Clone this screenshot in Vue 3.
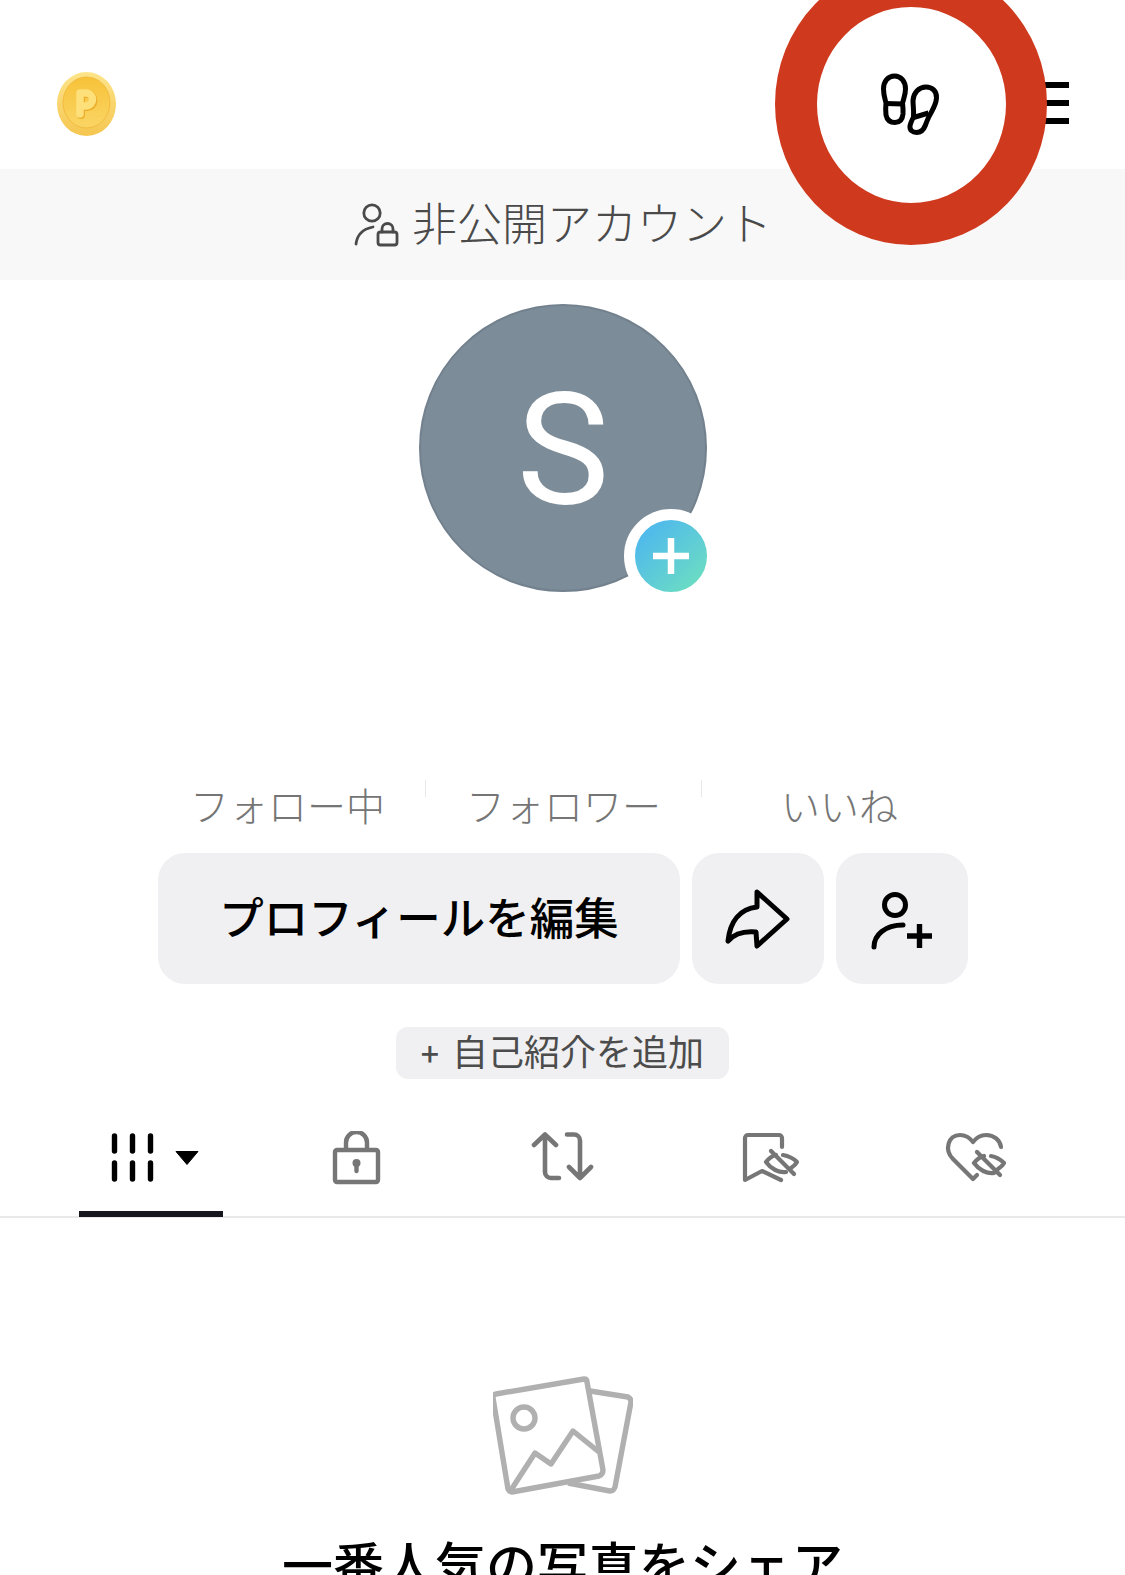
<script setup>
const stats = ['フォロー中', 'フォロワー', 'いいね']
</script>

<template>
  <div class="page">
    <header class="top">
      <svg class="coin" viewBox="0 0 59 64" aria-hidden="true">
        <defs>
          <linearGradient id="coinEdge" x1="0" y1="0" x2="0" y2="1">
            <stop offset="0" stop-color="#fde48a" />
            <stop offset="1" stop-color="#f5c650" />
          </linearGradient>
          <linearGradient id="coinFace" x1="0" y1="0" x2="0" y2="1">
            <stop offset="0" stop-color="#f7c238" />
            <stop offset="1" stop-color="#fad565" />
          </linearGradient>
        </defs>
        <ellipse cx="29.5" cy="32" rx="29.5" ry="32" fill="url(#coinEdge)" />
        <ellipse cx="29.5" cy="30.5" rx="23.5" ry="25.5" fill="url(#coinFace)" stroke="#f2bb3e" />
        <path d="M24 43V22h6a6.500 6.500 0 0 1 0 13h-6" fill="none" stroke="#ecae2a" stroke-width="8" stroke-linecap="round" stroke-linejoin="round" />
        <path d="M23 42V21h6a6.500 6.500 0 0 1 0 13h-6" fill="none" stroke="#fde07a" stroke-width="7.500" stroke-linecap="round" stroke-linejoin="round" />
      </svg>
      <div class="menu"><i></i><i></i><i></i></div>
    </header>

    <div class="banner">
      <svg class="private-icon" viewBox="0 0 46 46" fill="none" stroke="#4a4a4a" stroke-width="2.800" stroke-linecap="round" aria-hidden="true">
        <circle cx="19" cy="11" r="8.200" />
        <path d="M3 42c1-9 7-15 17-17" />
        <rect x="25" y="30" width="19" height="13" rx="2.500" />
        <path d="M29 30v-3a5.500 5.500 0 0 1 11 0v3" />
      </svg>
      <span>非公開アカウント</span>
    </div>

    <div class="avatar-row">
      <div class="avatar">
        <span class="initial">S</span>
        <div class="badge">
          <svg viewBox="0 0 72 72" aria-hidden="true">
            <path d="M36 18v36M18 36h36" stroke="#fff" stroke-width="6.500" />
          </svg>
        </div>
      </div>
    </div>

    <div class="stats">
      <template v-for="(label, i) in stats" :key="label">
        <i v-if="i" class="divider"></i>
        <div class="stat">{{ label }}</div>
      </template>
    </div>

    <div class="actions">
      <button class="btn wide">プロフィールを編集</button>
      <button class="btn square">
        <svg class="share" viewBox="0 0 72 72" fill="none" stroke="#000" stroke-width="5" stroke-linejoin="round" aria-hidden="true">
          <path d="M36 10l30 27-30 27-1-14c-11-1-21 1-28 9 2-20 12-32 29-34z" />
        </svg>
      </button>
      <button class="btn square">
        <svg viewBox="0 0 72 72" fill="none" stroke="#000" aria-hidden="true">
          <circle cx="29" cy="22" r="10.500" stroke-width="5" />
          <path d="M8 64c0-12 11-22 29-22" stroke-width="5" stroke-linecap="round" />
          <path d="M41 53h25M53.500 41v24" stroke-width="5.400" />
        </svg>
      </button>
    </div>

    <div class="bio-row">
      <div class="bio"><b>+</b>自己紹介を追加</div>
    </div>

    <nav class="tabs">
      <div class="tab active">
        <svg class="grid" viewBox="0 0 100 60" aria-hidden="true">
          <path d="M10.500 5v15M28.500 5v15M46.500 5v15M10.500 32v16M28.500 32v16M46.500 32v16" stroke="#000" stroke-width="5.400" stroke-linecap="round" fill="none" />
          <path d="M72 20.500h22L83 33.500z" fill="#000" stroke="#000" stroke-width="1" stroke-linejoin="round" />
        </svg>
      </div>
      <div class="tab">
        <svg viewBox="0 0 64 60" fill="none" stroke="#767676" stroke-width="4.400" stroke-linejoin="round" aria-hidden="true">
          <rect x="10" y="19" width="43" height="32" rx="2" />
          <path d="M21 19v-7.500a10.500 10.500 0 0 1 21 0v7.500" />
          <circle cx="31.500" cy="32" r="4" fill="#767676" stroke="none" />
          <path d="M31.500 33v7" stroke-linecap="round" />
        </svg>
      </div>
      <div class="tab">
        <svg viewBox="0 0 64 60" fill="none" stroke="#767676" stroke-width="4.600" stroke-linejoin="round" stroke-linecap="round" aria-hidden="true">
          <path d="M3 14L14 3.500 25 14M14 3.500V41a6 6 0 0 0 6 6h8M36 3.500h7a6 6 0 0 1 6 6V47M38 36l11 11 11-11" />
        </svg>
      </div>
      <div class="tab">
        <svg class="nudge" viewBox="0 0 64 60" fill="none" stroke="#767676" stroke-width="4.200" stroke-linejoin="round" stroke-linecap="round" aria-hidden="true">
          <path d="M46 16V7a3 3 0 0 0-3-3H12a3 3 0 0 0-3 3v42l17-9 19 9" />
          <path d="M35 20l23 23" />
          <path d="M30 31c3-4 6-6 10-7M30 31c5 7 13 11 20 10M47 24c6 1 11 4 14 7-1 2-3 4-6 6" />
        </svg>
      </div>
      <div class="tab">
        <svg class="nudge" viewBox="0 0 64 60" fill="none" stroke="#767676" stroke-width="4.200" stroke-linejoin="round" stroke-linecap="round" aria-hidden="true">
          <path d="M31 48L11 28C2 19 6 4 18 4c6 0 10 3 13 7 3-4 7-7 13-7 8 0 14 5 15 12M31 48l4-4" />
          <path d="M35 21l23 23" />
          <path d="M32 32c3-4 6-6 10-7M32 32c5 7 13 11 20 10M49 25c6 1 10 4 13 7-1 2-3 4-6 6" />
        </svg>
      </div>
    </nav>

    <section class="empty">
      <svg viewBox="495 1375 140 120" fill="none" stroke="#b0b0b0" stroke-width="5.400" stroke-linejoin="round" aria-hidden="true">
        <path d="M498 1393l88-15c2 0 3 1 3 3l16 88c0 3-1 5-4 6l-87 16c-2 0-3-1-4-3l-15-91c0-2 1-4 3-4z" />
        <path d="M592 1390l38 6c2 1 3 3 3 5l-16 85c-1 3-2 4-5 4l-42-8" />
        <ellipse cx="526" cy="1417" rx="11" ry="11" />
        <path d="M513 1489l24-37 16 11 22-33 26 21" />
      </svg>
      <h2>一番人気の写真をシェア</h2>
    </section>

    <div class="ring">
      <svg class="feet" viewBox="0 0 60 66" fill="none" stroke="#000" stroke-width="5" stroke-linejoin="round" aria-hidden="true">
        <path d="M14.500 5C8 5 3.500 10.500 3.500 18c0 6 1.500 10 2.500 14-.5 5-.5 8 0 12 1 5 4 7.500 9 7.500s7.500-3.500 8-8.500c.3-5 0-7-.5-11 1-4 3-8 3-14 0-7.500-4.500-13-11-13z" />
        <path d="M6 32.500l17 .5" />
        <path d="M46 16c-7 0-12.500 5.500-13 13.500 0 5 1 10 .5 16.500-1.500 3-3 6-3.500 9-.5 4 2.500 6.500 6.500 6.500 4.500 0 7.500-3.500 9-7.500 1-3 2-5 3-7.500 2.500-5.500 7.500-11.500 8-19.500.5-7-4.500-11-10.500-11z" />
        <path d="M33.500 46.500l15-4.500" />
      </svg>
    </div>
  </div>
</template>

<style>
html, body { margin: 0; background: #fff; }
</style>

<style scoped>
.page {
  position: relative;
  width: 1125px;
  height: 1575px;
  overflow: hidden;
  background: #fff;
  font-family: "Noto Sans CJK JP", "Noto Sans", sans-serif;
}
.top {
  height: 169px;
  display: flex;
  align-items: center;
  justify-content: space-between;
  padding: 39px 56px 0 57px;
  box-sizing: border-box;
}
.coin { width: 59px; height: 64px; }
.menu { width: 40px; display: flex; flex-direction: column; gap: 12px; margin-top: -2px; }
.menu i { display: block; height: 6px; background: #000; }
.banner {
  height: 111px;
  background: #f8f8f8;
  display: flex;
  align-items: center;
  justify-content: center;
  gap: 13px;
  color: #4a4a4a;
  font-size: 45px;
  font-weight: 300;
  line-height: 1;
}
.banner span { margin-top: -6px; }
.private-icon { width: 46px; height: 46px; }
.avatar-row { display: flex; justify-content: center; padding: 24px 0 0 1px; }
.avatar {
  position: relative;
  width: 288px;
  height: 288px;
  box-sizing: border-box;
  border: 2px solid #72818d;
  border-radius: 50%;
  background: #7c8c98;
  display: flex;
  align-items: center;
  justify-content: center;
  color: #fff;
  font-family: Roboto, sans-serif;
  font-weight: 400;
  font-size: 156px;
  line-height: 1;
}
.initial { padding-top: 4px; }
.badge {
  position: absolute;
  right: -13px;
  bottom: -13px;
  width: 72px;
  height: 72px;
  border-radius: 50%;
  border: 11px solid #fff;
  background: linear-gradient(135deg, #4ab2f4, #70e2bd);
}
.badge svg { display: block; width: 72px; height: 72px; }
.stats {
  margin-top: 188px;
  padding-left: 150px;
  display: flex;
  align-items: flex-start;
  height: 73px;
}
.stat {
  width: 275px;
  text-align: center;
  color: #757575;
  font-size: 39px;
  font-weight: 300;
  line-height: 48px;
}
.divider { width: 1px; height: 17px; background: #e8e8e8; }
.actions { display: flex; gap: 12px; padding-left: 158px; }
.btn {
  height: 131px;
  border: 0;
  border-radius: 27px;
  background: #f0f0f2;
  padding: 0;
  font: inherit;
  display: flex;
  align-items: center;
  justify-content: center;
}
.wide { width: 522px; color: #000; font-size: 44.5px; font-weight: 500; padding-bottom: 7px; }
.square { width: 132px; }
.square svg { width: 72px; height: 72px; }
.square svg.share { margin: 0 3px 2px 0; }
.bio-row { display: flex; justify-content: center; margin-top: 43px; }
.bio {
  width: 333px;
  height: 52px;
  border-radius: 12px;
  background: #f0f0f2;
  color: #4c4c4c;
  font-size: 36px;
  line-height: 46px;
  text-align: center;
  white-space: nowrap;
}
.bio b { font-weight: 500; font-size: 32px; margin-right: 13px; }
.tabs {
  margin-top: 46px;
  height: 91px;
  display: flex;
  padding-left: 48px;
  border-bottom: 2px solid #e9e9e9;
}
.tab {
  position: relative;
  width: 206px;
  display: flex;
  justify-content: center;
  padding-top: 6px;
  box-sizing: border-box;
}
.tab svg { width: 64px; height: 60px; }
.tab svg.grid { width: 100px; height: 60px; margin-left: 5px; }
.tab svg.nudge { margin-right: 3px; }
.tab.active::after {
  content: "";
  position: absolute;
  left: 31px;
  bottom: -1px;
  width: 144px;
  height: 6px;
  background: #16161e;
}
.empty { display: flex; flex-direction: column; align-items: center; padding-top: 158px; }
.empty svg { width: 140px; height: 120px; margin-left: 1px; }
.empty h2 {
  margin: 32px 0 0;
  color: #000;
  font-size: 51px;
  font-weight: 500;
  line-height: 1.4;
  white-space: nowrap;
}
.ring {
  position: absolute;
  left: 775px;
  top: -37px;
  width: 272px;
  height: 282px;
  box-sizing: border-box;
  border-radius: 50%;
  background: #fff;
  border-style: solid;
  border-color: #cf3a1e;
  border-width: 44px 41px 42px 42px;
  display: flex;
  align-items: center;
  justify-content: center;
}
.feet { width: 60px; height: 66px; margin: 0 3px 3px 0; }
</style>
